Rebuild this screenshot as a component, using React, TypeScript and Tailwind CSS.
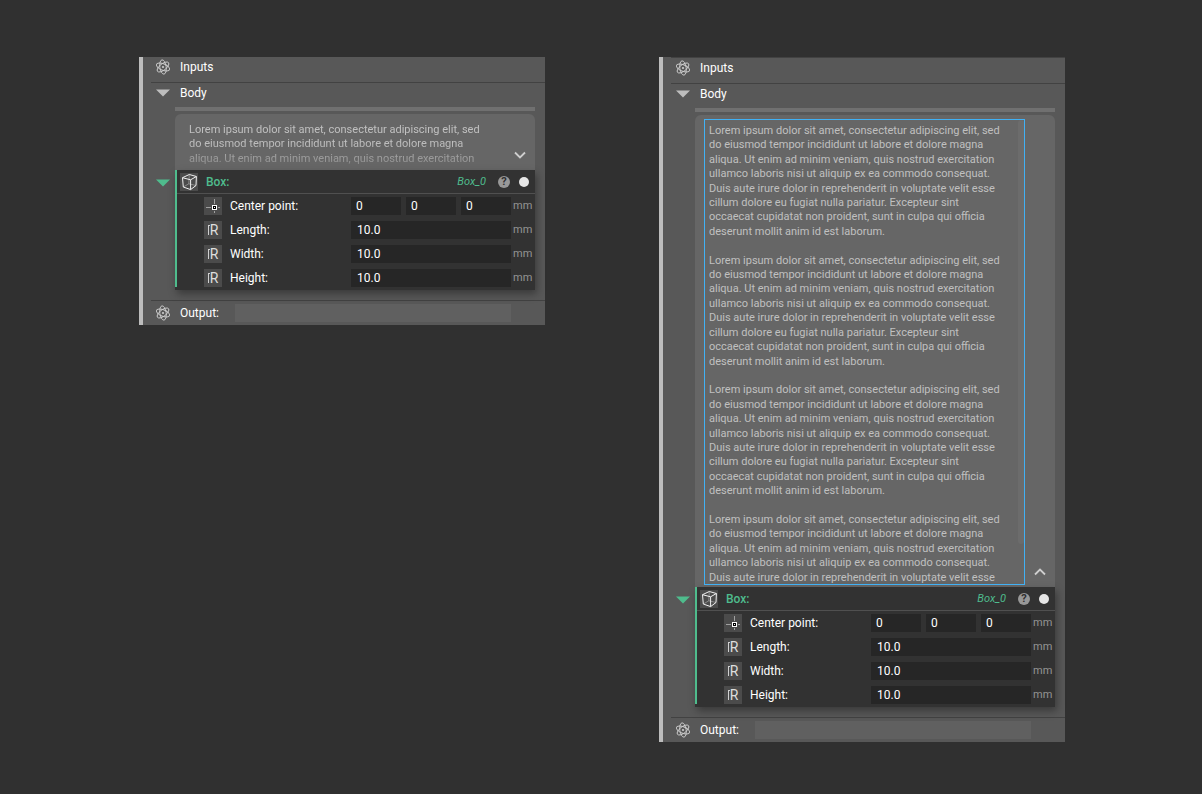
import React, { useId, useState } from "react";

const PARAGRAPH =
  "Lorem ipsum dolor sit amet, consectetur adipiscing elit, sed do eiusmod tempor incididunt ut labore et dolore magna aliqua. Ut enim ad minim veniam, quis nostrud exercitation ullamco laboris nisi ut aliquip ex ea commodo consequat. Duis aute irure dolor in reprehenderit in voluptate velit esse cillum dolore eu fugiat nulla pariatur. Excepteur sint occaecat cupidatat non proident, sunt in culpa qui officia deserunt mollit anim id est laborum.";

const COMMENT = Array(4).fill(PARAGRAPH).join("\n\n");

// the collapsed comment has room for about three lines
const PREVIEW = COMMENT.split(" ").slice(0, 27).join(" ");

const AtomIcon: React.FC = () => (
  <svg viewBox="0 0 16 16" className="size-4" fill="none" stroke="#cdcdcd" strokeWidth="0.9">
    <ellipse cx="8" cy="8" rx="7.2" ry="3.2" transform="rotate(82 8 8)" />
    <ellipse cx="8" cy="8" rx="7" ry="3.2" transform="rotate(22 8 8)" />
    <ellipse cx="8" cy="8" rx="7" ry="3.2" transform="rotate(142 8 8)" />
    <circle cx="8" cy="8" r="1.1" fill="#cdcdcd" stroke="none" />
  </svg>
);

const Triangle: React.FC<{ className: string }> = ({ className }) => (
  <svg viewBox="0 0 14 8" className={`h-2 w-3.5 ${className}`} fill="currentColor">
    <path d="M0 0.5H14L7 7.5Z" />
  </svg>
);

const BoxIcon: React.FC = () => (
  <svg viewBox="0 0 18 18" className="size-[18px] bg-[#4b4b4b]" fill="none" strokeLinejoin="round">
    <path d="M3.3 14L8.8 10.8L16 12.5M8.8 10.8L9.3 1.5" stroke="#a8a8a8" strokeWidth="0.7" />
    <path
      d="M2.5 4.7L9.3 1.5L16.4 3.5L10.6 6.8ZM2.5 4.7L3.3 14L10.6 16.6L10.6 6.8M16.4 3.5L16 12.5L10.6 16.6"
      stroke="#f0f0f0"
      strokeWidth="1"
    />
  </svg>
);

const PointIcon: React.FC = () => (
  <svg viewBox="0 0 18 18" className="size-[18px] bg-[#4b4b4b]" shapeRendering="crispEdges">
    <path d="M2 10.5H7M14 10.5H16M10.5 2V7M10.5 14V16" stroke="#a0a0a0" />
    <rect x="8" y="8" width="5" height="5" fill="#fff" />
    <rect x="9" y="9" width="3" height="3" fill="#000" />
    <rect x="10" y="10" width="1" height="1" fill="#fff" />
  </svg>
);

const RealIcon: React.FC = () => (
  <span
    aria-hidden="true"
    className="flex size-[18px] items-center justify-center bg-[#4b4b4b] text-[#dedede]"
  >
    <span className="h-2.5 w-0.5 border-t border-l border-[#d0d0d0]" />
    <span className="text-[14px] leading-[18px]">R</span>
  </span>
);

type ParameterProps = {
  icon: React.ReactNode;
  label: string;
  values: string[];
};

const Parameter: React.FC<ParameterProps> = ({ icon, label, values }) => {
  const id = useId();
  const padding = values.length > 1 ? "pl-[5px]" : "pl-1.5";

  return (
    <div className="flex h-[18px] items-center pl-[27px]">
      {icon}
      <label htmlFor={id} className="ml-2 w-[121px] shrink-0">
        {label}
      </label>
      <div className="flex min-w-0 flex-1 gap-[5px]">
        {values.map((value, index) => (
          <input
            key={index}
            id={index === 0 ? id : undefined}
            aria-label={index === 0 ? undefined : label}
            defaultValue={value}
            className={`h-[18px] w-0 min-w-0 flex-1 bg-[#262626] ${padding} outline-none`}
          />
        ))}
      </div>
      <span className="w-6 shrink-0 pl-0.5 text-[11px] text-[#949494]">mm</span>
    </div>
  );
};

const CommentEditor: React.FC = () => {
  const [offset, setOffset] = useState(0);

  const handleScroll = (event: React.UIEvent<HTMLTextAreaElement>) => {
    const { scrollTop, scrollHeight, clientHeight } = event.currentTarget;
    setOffset((scrollTop / scrollHeight) * clientHeight);
  };

  return (
    <div className="relative mt-1 mb-0.5 ml-[9px] min-w-0 flex-1">
      <textarea
        aria-label="Comment"
        defaultValue={COMMENT}
        onScroll={handleScroll}
        className="block h-[466px] w-full resize-none border border-[#41b1f5] p-1 pr-[19px] outline-none [scrollbar-width:none]"
      />
      <div
        className="absolute top-px right-px h-[424px] w-1.5 rounded-sm bg-[#6c6c6c]"
        style={{ transform: `translateY(${offset}px)` }}
      />
    </div>
  );
};

const Comment: React.FC<{ expanded: boolean; onToggle: () => void }> = ({
  expanded,
  onToggle,
}) => (
  <div className="flex items-end rounded-t-md bg-[#666666] text-[11px] leading-[1.31] text-[#c0c0c0]">
    {expanded ? (
      <CommentEditor />
    ) : (
      <div className="h-14 min-w-0 flex-1 overflow-hidden mask-b-from-50% mask-b-to-[120%] pt-[9px] pr-5 pl-3.5">
        <p>{PREVIEW}</p>
      </div>
    )}
    <button
      type="button"
      onClick={onToggle}
      aria-label={expanded ? "Collapse" : "Expand"}
      className="flex size-[30px] shrink-0 items-center justify-center"
    >
      <svg viewBox="0 0 12 8" className="h-2 w-3" fill="none" stroke="#cfcfcf" strokeWidth="1.8">
        <path d={expanded ? "M1 6.5L6 1.5L11 6.5" : "M1 1.5L6 6.5L11 1.5"} />
      </svg>
    </button>
  </div>
);

const BoxNode: React.FC = () => (
  <div className="bg-[#323232] pb-[3px] shadow-[2px_4px_8px_rgba(0,0,0,0.35)]">
    <div className="border-l-2 border-[#4fbc8d]">
      <div className="flex h-6 items-center border-b border-[#505050] pr-1.5 pl-[3px] text-[#4fbc8d]">
        <BoxIcon />
        <span className="ml-2 flex-1 font-medium">Box:</span>
        <span className="text-[11px] italic">Box_0</span>
        <button
          type="button"
          aria-label="Help"
          className="ml-3 flex size-3 items-center justify-center rounded-full bg-[#989898] text-[11px] leading-3 font-bold text-[#303030]"
        >
          ?
        </button>
        <span className="ml-[9px] size-2.5 rounded-full bg-[#e6e6e6]" />
      </div>
      <div className="flex flex-col gap-1.5 pt-[3px]">
        <Parameter icon={<PointIcon />} label="Center point:" values={["0", "0", "0"]} />
        <Parameter icon={<RealIcon />} label="Length:" values={["10.0"]} />
        <Parameter icon={<RealIcon />} label="Width:" values={["10.0"]} />
        <Parameter icon={<RealIcon />} label="Height:" values={["10.0"]} />
      </div>
    </div>
  </div>
);

type NodePanelProps = {
  defaultExpanded?: boolean;
  className?: string;
};

const NodePanel: React.FC<NodePanelProps> = ({ defaultExpanded = false, className = "" }) => {
  const [expanded, setExpanded] = useState(defaultExpanded);
  const outputId = useId();

  return (
    <section className="border-l-4 border-[#bdbdbd] bg-[#585858] pl-2">
      <div className={`box-content flex h-[25px] items-start ${className}`}>
        <span className="flex h-5 w-6 items-center justify-center">
          <AtomIcon />
        </span>
        <span className="pl-[5px] leading-5">Inputs</span>
      </div>
      <div className="flex h-[25px] items-start border-t border-[#424242]">
        <span className="flex h-5 w-6 items-center justify-center">
          <Triangle className="text-[#bdbdbd]" />
        </span>
        <span className="pl-[5px] leading-5">Body</span>
      </div>
      <div className="mr-2.5 ml-6 h-1 bg-[#707070]" />
      <div className="mt-[3px] mr-2.5 ml-6">
        <Comment expanded={expanded} onToggle={() => setExpanded(!expanded)} />
      </div>
      <div className="mb-2.5 flex pr-2.5">
        <span className="flex h-[26px] w-6 items-center justify-center">
          <Triangle className="text-[#4fbc8d]" />
        </span>
        <div className="min-w-0 flex-1">
          <BoxNode />
        </div>
      </div>
      <div className="flex h-[25px] items-center border-t border-[#424242] pr-[34px]">
        <span className="flex w-6 justify-center">
          <AtomIcon />
        </span>
        <label htmlFor={outputId} className="w-[60px] shrink-0 pl-[5px]">
          Output:
        </label>
        <input
          id={outputId}
          className="h-[18px] min-w-0 flex-1 bg-[#606060] px-1.5 outline-none"
        />
      </div>
    </section>
  );
};

export default function App() {
  return (
    <main className="min-h-screen bg-[#303030] pt-[57px] font-[Roboto,sans-serif] text-[12px] leading-4 text-white">
      <div className="mx-auto grid max-w-[928px] grid-cols-2 items-start gap-[114px] pl-0.5">
        <NodePanel />
        <NodePanel defaultExpanded className="border-t border-[#424242]" />
      </div>
    </main>
  );
}
